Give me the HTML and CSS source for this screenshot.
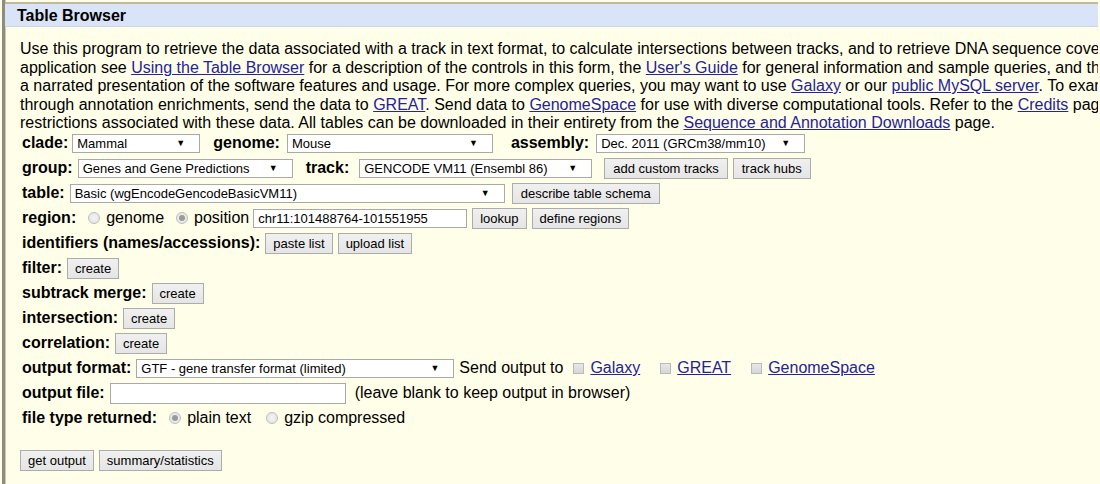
FILE: index.html
```html
<!DOCTYPE html>
<html>
<head>
<meta charset="utf-8">
<title>Table Browser</title>
<link rel="stylesheet" href="styles.css">
</head>
<body>
<div class="frame">
  <div class="titlebar">Table Browser</div>
  <div class="content">
    <p class="intro">Use this program to retrieve the data associated with a track in text format, to calculate intersections between tracks, and to retrieve DNA sequence cove<br>application see <a href="#">Using the Table Browser</a> for a description of the controls in this form, the <a href="#">User's Guide</a> for general information and sample queries, and th<br>a narrated presentation of the software features and usage. For more complex queries, you may want to use <a href="#">Galaxy</a> or our <a href="#">public MySQL server</a>. To exam<br>through annotation enrichments, send the data to <a href="#">GREAT</a>. Send data to <a href="#">GenomeSpace</a> for use with diverse computational tools. Refer to the <a href="#">Credits</a> pag<br>restrictions associated with these data. All tables can be downloaded in their entirety from the <a href="#">Sequence and Annotation Downloads</a> page.</p>

    <div class="form">
      <div class="row">
        <span class="lbl">clade:</span>
        <span class="sel w-clade">Mammal<i class="arr">▼</i></span>
        <span class="lbl sp">genome:</span>
        <span class="sel w-genome">Mouse<i class="arr">▼</i></span>
        <span class="lbl sp3">assembly:</span>
        <span class="sel w-assembly">Dec. 2011 (GRCm38/mm10)<i class="arr">▼</i></span>
      </div>
      <div class="row">
        <span class="lbl">group:</span>
        <span class="sel w-group">Genes and Gene Predictions<i class="arr">▼</i></span>
        <span class="lbl sp">track:</span>
        <span class="sel w-track">GENCODE VM11 (Ensembl 86)<i class="arr">▼</i></span>
        <button class="btn sp-btn wide">add custom tracks</button>
        <button class="btn wide">track hubs</button>
      </div>
      <div class="row">
        <span class="lbl">table:</span>
        <span class="sel w-table">Basic (wgEncodeGencodeBasicVM11)<i class="arr">▼</i></span>
        <button class="btn sp2 wide">describe table schema</button>
      </div>
      <div class="row">
        <span class="lbl">region:</span>
        <span class="radio r-first"></span><span class="txt">genome</span>
        <span class="radio on r-next"></span><span class="txt">position</span>
        <span class="inp w-pos">chr11:101488764-101551955</span>
        <button class="btn">lookup</button>
        <button class="btn">define regions</button>
      </div>
      <div class="row">
        <span class="lbl">identifiers (names/accessions):</span>
        <button class="btn">paste list</button>
        <button class="btn">upload list</button>
      </div>
      <div class="row">
        <span class="lbl">filter:</span>
        <button class="btn">create</button>
      </div>
      <div class="row">
        <span class="lbl">subtrack merge:</span>
        <button class="btn">create</button>
      </div>
      <div class="row">
        <span class="lbl">intersection:</span>
        <button class="btn">create</button>
      </div>
      <div class="row">
        <span class="lbl">correlation:</span>
        <button class="btn">create</button>
      </div>
      <div class="row">
        <span class="lbl">output format:</span>
        <span class="sel w-format">GTF - gene transfer format (limited)<i class="arr">▼</i></span>
        <span class="txt">Send output to</span>
        <span class="check c-first"></span><a href="#" class="txt">Galaxy</a>
        <span class="check c-next"></span><a href="#" class="txt">GREAT</a>
        <span class="check c-next"></span><a href="#" class="txt">GenomeSpace</a>
      </div>
      <div class="row">
        <span class="lbl">output file:</span>
        <span class="inp w-file"></span>
        <span class="txt note">(leave blank to keep output in browser)</span>
      </div>
      <div class="row">
        <span class="lbl">file type returned:</span>
        <span class="radio on r-first2"></span><span class="txt">plain text</span>
        <span class="radio r-next2"></span><span class="txt">gzip compressed</span>
      </div>
    </div>

    <div class="actions">
      <button class="btn">get output</button>
      <button class="btn">summary/statistics</button>
    </div>
  </div>
</div>
</body>
</html>
```

FILE: styles.css
```css
html, body {
  margin: 0;
  padding: 0;
  background: #fffee9;
  overflow: hidden;
  height: 484px;
}
body {
  font-family: "Liberation Sans", Arial, sans-serif;
  font-size: 16px;
  color: #000;
}
.frame {
  margin-left: 2px;
  padding-top: 2px;
  border-left: 3px solid #8e8d7e;
  box-shadow: inset 1px 0 0 #c9c8b8;
  min-height: 484px;
  width: 1093px;
  overflow: hidden;
}
.titlebar {
  border-top: 2px solid #c4b89a;
  background: #d9e4f8;
  border-bottom: 1px solid #cdd6e6;
  height: 22px;
  line-height: 23px;
  font-weight: bold;
  font-size: 16px;
  padding-left: 12px;
}
.content {
  padding-left: 15px;
}
.intro {
  margin: 13px 0 -2px 0;
  white-space: nowrap;
  line-height: 18.5px;
}
a {
  color: #24239a;
  text-decoration: underline;
}
.form {
  padding-left: 2px;
}
.row {
  display: flex;
  align-items: center;
  height: 25px;
  white-space: nowrap;
}
.lbl {
  font-weight: bold;
  margin-right: 5px;
}
.sp { margin-left: 13px; }
.sp3 { margin-left: 18px; }
.txt { white-space: nowrap; }
.sel, .inp {
  position: relative;
  box-sizing: border-box;
  height: 19px;
  border: 1px solid #a9a9a9;
  background: #fff;
  font-size: 13px;
  line-height: 17px;
  padding-left: 4px;
  white-space: nowrap;
  overflow: hidden;
}
.inp { margin-right: 5px; }
.arr {
  position: absolute;
  right: 14px;
  top: 0;
  font-style: normal;
  font-size: 9px;
  line-height: 17px;
}
.w-clade { width: 128px; margin-left: -1px; }
.w-genome { width: 206px; margin-left: 2px; }
.w-assembly { width: 209px; margin-left: 2px; }
.w-group { width: 215px; }
.w-track { width: 233px; margin-left: 5px; }
.w-table { width: 435px; }
.w-pos { width: 214px; margin-left: 4px; }
.w-format { width: 318px; margin-right: 5px; }
.w-file { width: 236px; height: 21px; margin-left: 0; margin-right: 9px; }
.btn {
  font-family: "Liberation Sans", Arial, sans-serif;
  font-size: 13px;
  height: 21px;
  padding: 0 7px;
  margin: 0 5px 0 0;
  border: 1px solid #acacac;
  border-radius: 0;
  background: linear-gradient(#f0f0f0, #e5e5e5);
  color: #000;
  line-height: 19px;
}
.btn.wide { padding: 0 8px; }
.btn.sp-btn { margin-left: 12px; }
.btn.sp2 { margin-left: 7px; }
.radio {
  box-sizing: border-box;
  width: 12px;
  height: 12px;
  border-radius: 50%;
  border: 1px solid #bdbdbd;
  background: radial-gradient(circle, #f4f4f4 0, #e2e2e2 100%);
  margin-right: 6px;
  position: relative;
}
.radio.on::after {
  content: "";
  position: absolute;
  left: 2px;
  top: 2px;
  width: 6px;
  height: 6px;
  border-radius: 50%;
  background: #9a9a9a;
}
.r-first { margin-left: 7px; }
.r-next { margin-left: 12px; }
.r-first2 { margin-left: 7px; }
.r-next2 { margin-left: 15px; }
.check {
  box-sizing: border-box;
  width: 11px;
  height: 11px;
  border: 1px solid #b9b9b9;
  background: linear-gradient(#e8e8e8, #d6d6d6);
  margin-right: 6px;
}
.c-first { margin-left: 10px; }
.c-next { margin-left: 20px; }
.actions {
  display: flex;
  margin-top: 19px;
}
```
